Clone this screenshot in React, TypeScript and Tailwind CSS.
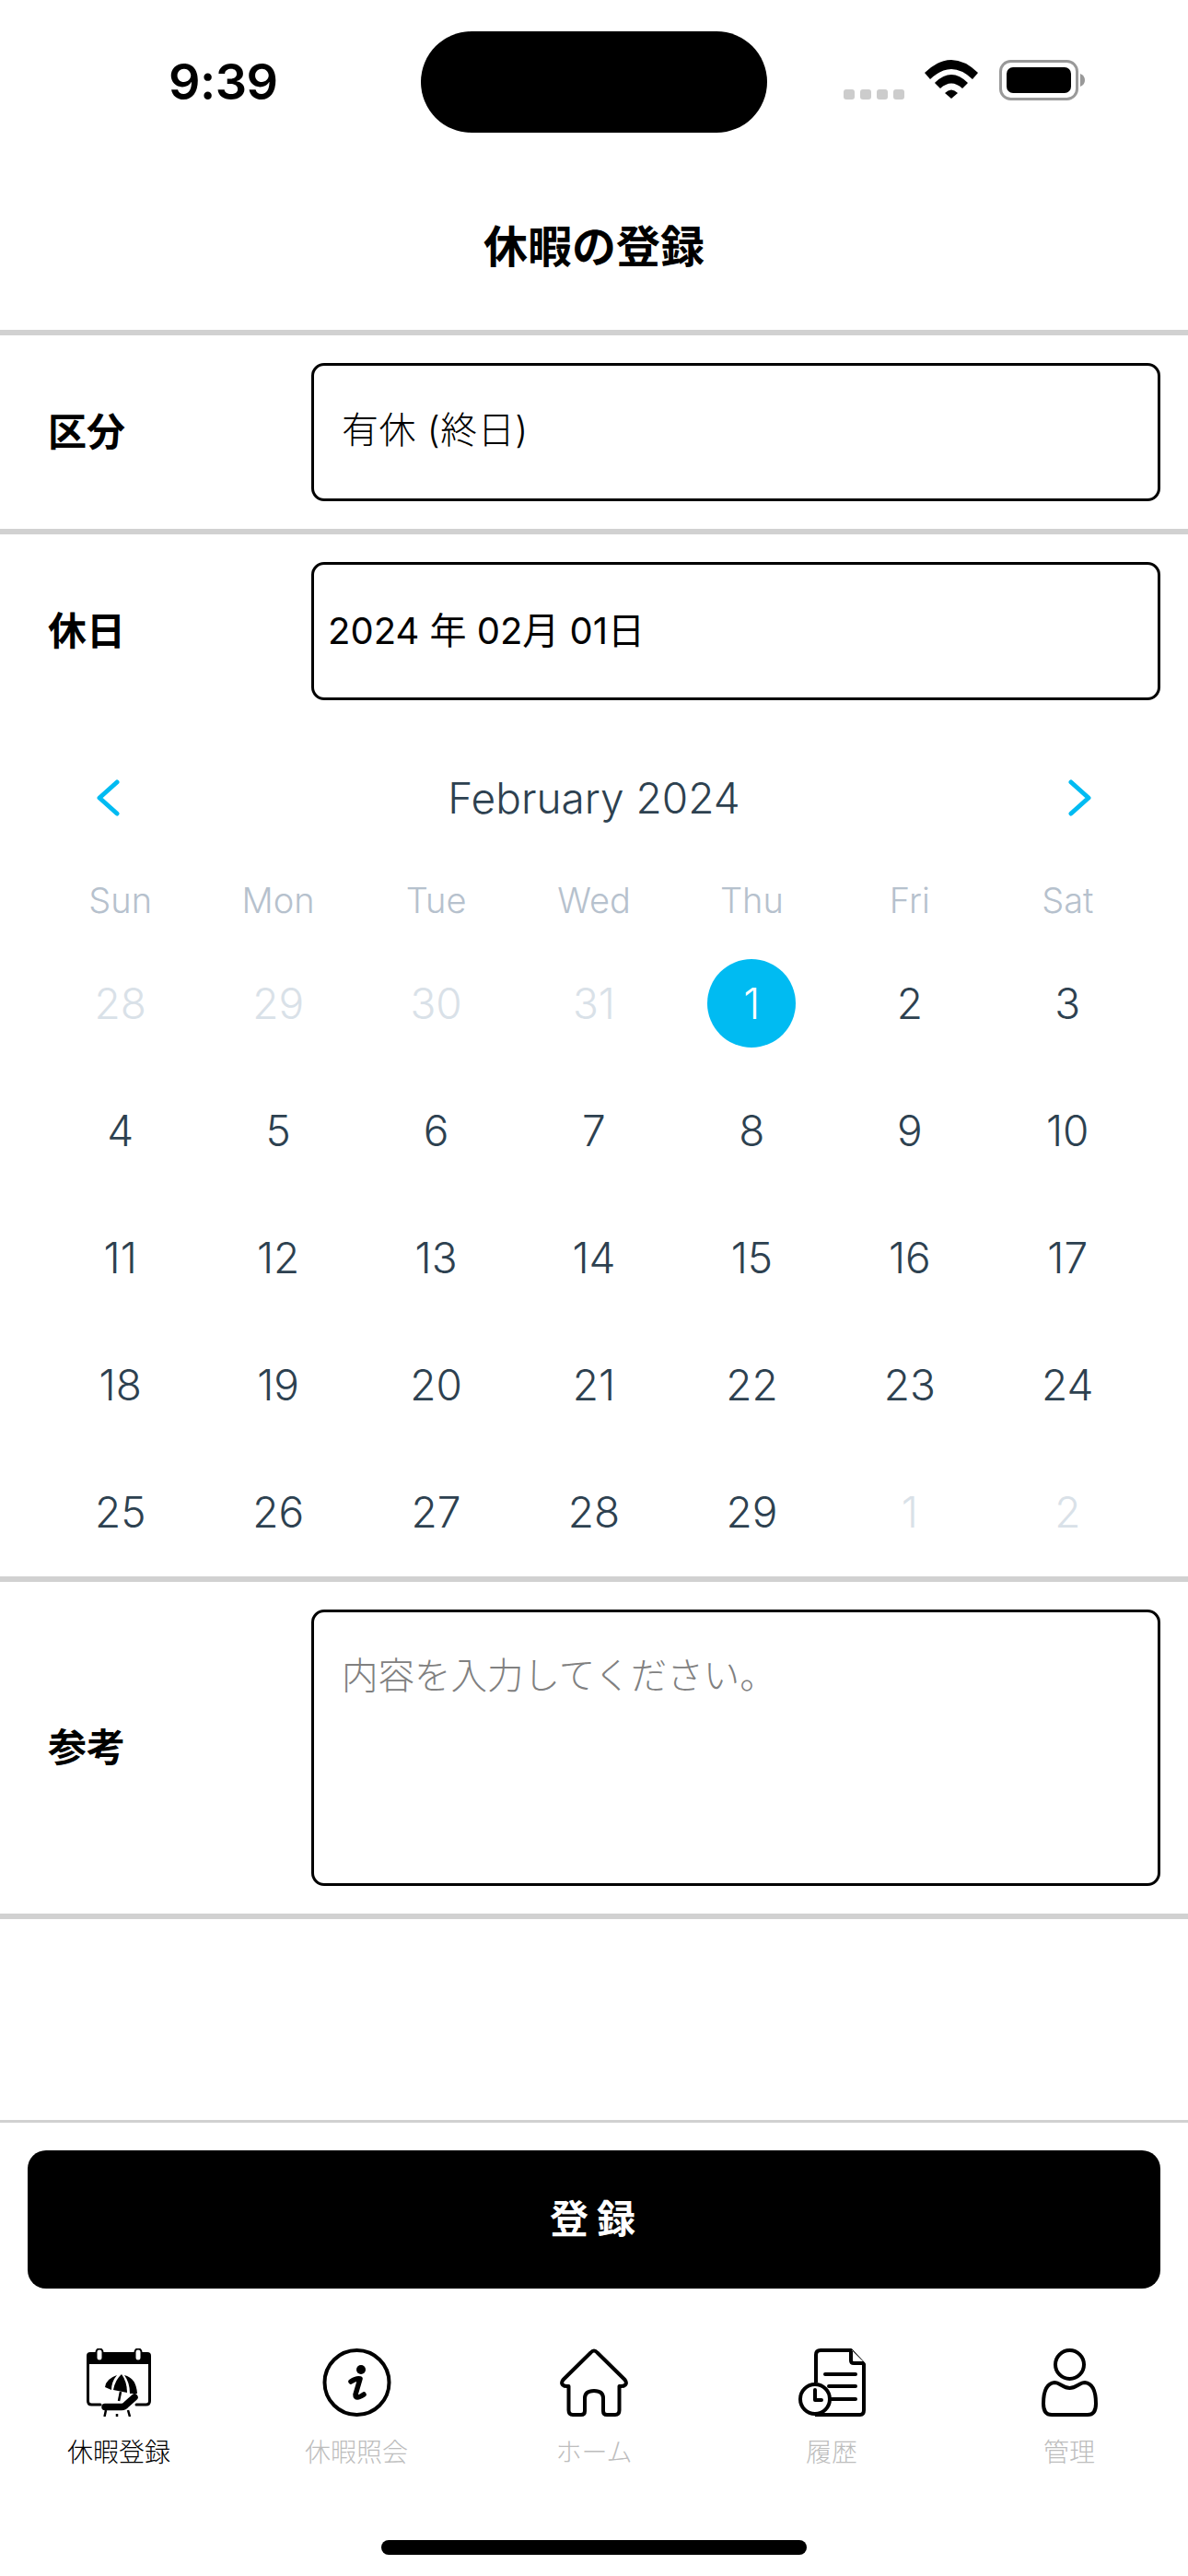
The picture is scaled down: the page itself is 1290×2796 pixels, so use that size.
import React from 'react'

const weekdays = ['Sun', 'Mon', 'Tue', 'Wed', 'Thu', 'Fri', 'Sat']

const days = [
  { n: 28, off: true }, { n: 29, off: true }, { n: 30, off: true }, { n: 31, off: true }, { n: 1, selected: true }, { n: 2 }, { n: 3 },
  { n: 4 }, { n: 5 }, { n: 6 }, { n: 7 }, { n: 8 }, { n: 9 }, { n: 10 },
  { n: 11 }, { n: 12 }, { n: 13 }, { n: 14 }, { n: 15 }, { n: 16 }, { n: 17 },
  { n: 18 }, { n: 19 }, { n: 20 }, { n: 21 }, { n: 22 }, { n: 23 }, { n: 24 },
  { n: 25 }, { n: 26 }, { n: 27 }, { n: 28 }, { n: 29 }, { n: 1, off: true }, { n: 2, off: true },
]

const CalendarIcon = () => (
  <svg width="70" height="74" viewBox="0 0 70 74" fill="none">
    <path d="M4 4H66Q70 4 70 8V17H0V8Q0 4 4 4Z" fill="black" />
    <rect x="10.5" y="0.5" width="7" height="13" rx="3.5" fill="white" stroke="black" strokeWidth="2" />
    <rect x="52.5" y="0.5" width="7" height="13" rx="3.5" fill="white" stroke="black" strokeWidth="2" />
    <path d="M1.5 17V57Q1.5 61 5.5 61H15M54 61H64.500Q68.500 61 68.500 57V17" stroke="black" strokeWidth="3" strokeLinecap="round" />
    <path d="M20 42Q21 33 33 29Q27 36 27 45Z" fill="black" />
    <path d="M29 45Q31 34 38 28Q44 36 44 48Z" fill="black" />
    <path d="M41 29Q54 32 55 49L47 49Q47 37 41 29Z" fill="black" />
    <path d="M37 47L35 57" stroke="black" strokeWidth="2.500" />
    <path d="M20 63.500H38Q41 63.500 43 61L52 53" stroke="black" strokeWidth="7.500" strokeLinecap="round" strokeLinejoin="round" />
    <path d="M21 67L19.500 74M33 71V74M45 67L47 74" stroke="black" strokeWidth="2.500" />
  </svg>
)

const InfoIcon = () => (
  <svg width="75" height="74" viewBox="0 0 75 74" fill="none">
    <circle cx="37.500" cy="37" r="35" stroke="black" strokeWidth="4" />
    <circle cx="42" cy="23" r="5" fill="black" />
    <path d="M31 36Q37 32 41 33L36 50Q36 56 45 50" stroke="black" strokeWidth="5.500" strokeLinecap="round" strokeLinejoin="round" />
  </svg>
)

const HomeIcon = () => (
  <svg width="74" height="74" viewBox="0 0 74 74" fill="none">
    <path
      d="M33.500 4.500Q37 0.500 40.500 4.500L70.500 34Q73 37.500 71 39.500Q69 41.500 64.500 41V67Q64.500 72 60 72H51Q47 72 47 68V54Q47 46 37 46Q27 46 27 54V68Q27 72 23 72H14Q9.500 72 9.500 67V41Q5 41.500 3 39.500Q1 37.500 3.500 34Z"
      stroke="black"
      strokeWidth="4"
      strokeLinejoin="round"
    />
  </svg>
)

const HistoryIcon = () => (
  <svg width="73" height="74" viewBox="0 0 73 74" fill="none">
    <path d="M19 37V7Q19 2 24 2H57L71 17V67Q71 72 67 72H18" stroke="black" strokeWidth="4" strokeLinejoin="round" />
    <path d="M58 2V15H71" fill="white" />
    <path d="M57 3V13Q57 16 60 16H71" stroke="black" strokeWidth="4" />
    <path d="M29 28H62M33 41H62M36 55H62" stroke="black" strokeWidth="4" strokeLinecap="round" />
    <circle cx="18" cy="55" r="16" fill="white" stroke="black" strokeWidth="4" />
    <path d="M18 45V56H25" stroke="black" strokeWidth="4" strokeLinecap="round" strokeLinejoin="round" />
  </svg>
)

const UserIcon = () => (
  <svg width="61" height="74" viewBox="0 0 61 74" fill="none">
    <circle cx="30.500" cy="17.500" r="15.500" stroke="black" strokeWidth="4" />
    <path
      d="M2 60C2 47 5 38 14 37C20 37 23 43 30.500 43C38 43 41 37 47 37C56 38 59 47 59 60Q59 72 50 72H11Q2 72 2 60Z"
      stroke="black"
      strokeWidth="4"
      strokeLinejoin="round"
    />
  </svg>
)

const tabs = [
  { label: '休暇登録', icon: <CalendarIcon />, active: true },
  { label: '休暇照会', icon: <InfoIcon /> },
  { label: 'ホーム', icon: <HomeIcon /> },
  { label: '履歴', icon: <HistoryIcon /> },
  { label: '管理', icon: <UserIcon /> },
]

const Divider = () => <div className="h-[6px] bg-[#d1d1d1]" />

const App = () => {
  return (
    <main className="w-[1290px] h-[2796px] bg-white flex flex-col text-black font-['Inter','Noto_Sans_CJK_JP',sans-serif]">
      {/* status bar + title */}
      <header className="h-[358px] flex flex-col">
        <div className="h-[178px] pt-[34px] flex items-start">
          <div className="w-[457px] h-[110px] flex items-center pl-[183px]">
            <span className="text-[54px] leading-none font-semibold tracking-[-0.5px]">9:39</span>
          </div>
          <div className="w-[376px] h-[110px] bg-black rounded-[55px]" />
          <div className="flex-1 h-[110px] flex items-center pl-[83px] gap-[22px]">
            <svg width="66" height="11" viewBox="0 0 66 11" className="mt-[26px]">
              <rect x="0" y="0" width="12" height="11" rx="3" fill="#cccccc" />
              <rect x="18" y="0" width="12" height="11" rx="3" fill="#cccccc" />
              <rect x="36" y="0" width="12" height="11" rx="3" fill="#cccccc" />
              <rect x="54" y="0" width="12" height="11" rx="3" fill="#cccccc" />
            </svg>
            <svg width="58" height="42" viewBox="0 0 58 42" className="-mt-[6px]">
              <path d="M0 14Q29 -14 58 14L52 21Q29 -1 6 21Z" fill="black" />
              <path d="M11 25Q29 7 47 25L41 31Q29 20 17 31Z" fill="black" />
              <path d="M22 36Q29 29 36 36L29 42Z" fill="black" />
            </svg>
            <svg width="93" height="44" viewBox="0 0 93 44" className="-mt-[5px] ml-px">
              <rect x="1.500" y="1.500" width="83" height="41" rx="11" fill="white" stroke="#999999" strokeWidth="3" />
              <rect x="8" y="8" width="70" height="28" rx="7" fill="black" />
              <path d="M88 15Q93 17 93 22Q93 27 88 29Z" fill="#999999" />
            </svg>
          </div>
        </div>
        <div className="flex-1 flex items-center justify-center">
          <h1 className="text-[48px] leading-none font-bold">休暇の登録</h1>
        </div>
      </header>
      <Divider />

      <section className="h-[210px] flex items-center pl-[52px] pr-[30px]">
        <span className="w-[286px] text-[42px] leading-none font-bold">区分</span>
        <div className="w-[922px] h-[150px] border-[3px] border-black rounded-[14px] flex items-center px-[30px] pb-[4px] text-[40px] font-light tracking-[0.5px]">
          有休 (終日)
        </div>
      </section>
      <Divider />

      <section className="flex items-center pl-[52px] pr-[30px] pt-[30px]">
        <span className="w-[286px] text-[42px] leading-none font-bold">休日</span>
        <div className="w-[922px] h-[150px] border-[3px] border-black rounded-[14px] flex items-center px-[15px] text-[40px]">
          2024 年 02月 01日
        </div>
      </section>

      {/* calendar */}
      <section className="px-[45px]">
        <div className="mt-[76px] h-[60px] flex items-center justify-between px-[60px]">
          <svg width="25" height="40" viewBox="0 0 25 40" fill="none">
            <path d="M22 3L3 20L22 37" stroke="#00bbf2" strokeWidth="5" strokeLinecap="round" strokeLinejoin="round" />
          </svg>
          <span className="text-[46px] leading-none font-light text-[#2d4150]">February 2024</span>
          <svg width="25" height="40" viewBox="0 0 25 40" fill="none">
            <path d="M3 3L22 20L3 37" stroke="#00bbf2" strokeWidth="5" strokeLinecap="round" strokeLinejoin="round" />
          </svg>
        </div>
        <div className="mt-[51px] grid grid-cols-7 h-[60px]">
          {weekdays.map((d) => (
            <div key={d} className="flex items-center justify-center text-[38px] font-light text-[#b6c1cd]">
              {d}
            </div>
          ))}
        </div>
        <div className="mt-[13px] grid grid-cols-7">
          {days.map((d, i) => (
            <div key={i} className="h-[138px] flex items-center justify-center">
              {d.selected ? (
                <div className="w-[96px] h-[96px] rounded-full bg-[#00bbf2] text-white flex items-center justify-center text-[46px] font-light">
                  {d.n}
                </div>
              ) : (
                <span className={d.off ? 'text-[46px] font-light text-[#d9e1e8]' : 'text-[46px] font-light text-[#2d4150]'}>{d.n}</span>
              )}
            </div>
          ))}
        </div>
      </section>
      <div className="h-px" />
      <Divider />

      <section className="h-[360px] flex items-center pl-[52px] pr-[30px]">
        <span className="w-[286px] text-[42px] leading-none font-bold">参考</span>
        <div className="w-[922px] h-[300px] border-[3px] border-black rounded-[14px] px-[30px] pt-[50px] text-[39.5px] leading-none font-light text-[#808080]">
          内容を入力してください。
        </div>
      </section>
      <Divider />

      <div className="flex-1" />

      {/* footer */}
      <footer className="h-[495px] border-t-[3px] border-[#d1d1d1] flex flex-col">
        <div className="mt-[30px] mx-[30px] h-[150px] bg-black rounded-[20px] flex items-center justify-center text-white text-[42px] font-bold tracking-[9px] pl-[6px] pb-[2px]">
          登録
        </div>
        <nav className="mt-[65px] flex">
          {tabs.map((t) => (
            <div key={t.label} className="w-[258px] flex flex-col items-center">
              <div className="h-[74px] flex items-center justify-center">{t.icon}</div>
              <span className={t.active ? 'mt-[23px] text-[28px] leading-[32px] font-light text-black' : 'mt-[23px] text-[28px] leading-[32px] font-light text-[#bdbdbd]'}>
                {t.label}
              </span>
            </div>
          ))}
        </nav>
        <div className="mt-[79px] mx-auto w-[462px] h-[16px] rounded-full bg-black" />
      </footer>
    </main>
  )
}

export default App
